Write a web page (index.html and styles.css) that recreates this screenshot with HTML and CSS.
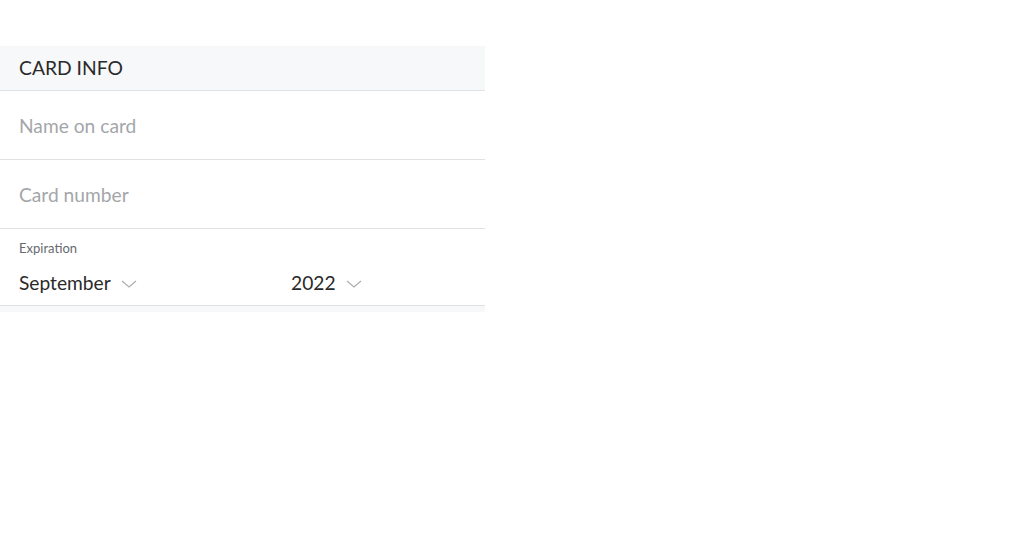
FILE: index.html
```html
<!DOCTYPE html>
<html>
<head>
<meta charset="utf-8">
<link rel="stylesheet" href="styles.css">
</head>
<body>
<div class="card-form">
  <div class="section-header">CARD INFO</div>
  <div class="field"><span class="placeholder">Name on card</span></div>
  <div class="field"><span class="placeholder">Card number</span></div>
  <div class="expiration">
    <div class="exp-label">Expiration</div>
    <div class="exp-selects">
      <div class="select">September
        <svg class="chev" width="16" height="8" viewBox="0 0 16 8"><path d="M1 1 L8 7 L15 1" fill="none" stroke="#a9acb0" stroke-width="1.1"/></svg>
      </div>
      <div class="select">2022
        <svg class="chev" width="16" height="8" viewBox="0 0 16 8"><path d="M1 1 L8 7 L15 1" fill="none" stroke="#a9acb0" stroke-width="1.1"/></svg>
      </div>
    </div>
  </div>
  <div class="footer-band"></div>
</div>
</body>
</html>
```
FILE: styles.css
```css
html, body {
  margin: 0;
  padding: 0;
  background: #ffffff;
}
body {
  font-family: Lato, "Open Sans", sans-serif;
  padding-top: 46px;
}
.card-form {
  width: 485px;
}
.section-header {
  height: 42px;
  background: #f7f8fa;
  border-bottom: 1px solid #dfe1e5;
  box-sizing: content-box;
  display: flex;
  align-items: center;
  padding-left: 19px;
  padding-bottom: 2px;
  font-size: 19.3px;
  color: #2a2a2a;
}
.field {
  height: 68px;
  border-bottom: 1px solid #dfe1e5;
  display: flex;
  align-items: center;
  padding-left: 19px;
  font-size: 19.2px;
}
.placeholder {
  color: #a3a6aa;
}
.expiration {
  height: 77px;
  border-bottom: 1px solid #dfe1e5;
  padding-left: 19px;
  box-sizing: border-box;
  padding-top: 11px;
}
.exp-label {
  font-size: 13px;
  color: #666a6e;
  line-height: 16px;
}
.exp-selects {
  display: grid;
  grid-template-columns: 272px 1fr;
  margin-top: 16px;
}
.select {
  display: flex;
  align-items: center;
  gap: 10px;
  font-size: 19.2px;
  color: #2a2a2a;
  line-height: 22px;
}
.chev {
  display: block;
  margin-top: 1px;
}
.footer-band {
  height: 6px;
  background: #f7f8fa;
}
```
